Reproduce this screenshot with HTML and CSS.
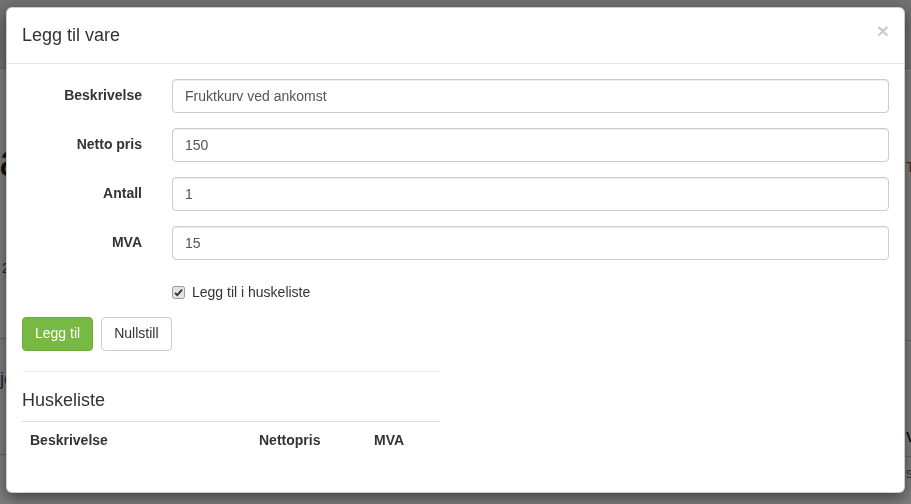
FILE: index.html
```html
<!DOCTYPE html>
<html lang="no">

<head>
    <meta charset="UTF-8">
    <meta name="viewport" content="width=device-width, initial-scale=1.0">
    <title>Legg til vare</title>
    <link rel="stylesheet" href="styles.css">
</head>

<body>
    <!-- siden bak dialogen -->
    <div class="page">
        <div class="topbar"></div>
        <div class="page-cols">
            <div class="page-left">
                <h1 class="page-title">av</h1>
                <p class="page-date">2017</p>
                <div class="page-rule"></div>
                <a class="page-link" href="#">jevnlig</a>
                <div class="page-rule low"></div>
            </div>
            <div class="page-right">
                <p class="page-warn">Trekk</p>
                <div class="page-rule mid"></div>
                <p class="page-head">Vare</p>
                <div class="page-rule tight"></div>
                <p class="page-sum">sum</p>
            </div>
        </div>
    </div>

    <div class="backdrop"></div>

    <div class="modal">
        <div class="modal-content">
            <div class="modal-header">
                <button type="button" class="close">&times;</button>
                <h4 class="modal-title">Legg til vare</h4>
            </div>

            <div class="modal-body">
                <form class="form-horizontal">
                    <div class="form-group">
                        <label class="control-label">Beskrivelse</label>
                        <input class="form-control" type="text" value="Fruktkurv ved ankomst">
                    </div>
                    <div class="form-group">
                        <label class="control-label">Netto pris</label>
                        <input class="form-control" type="text" value="150">
                    </div>
                    <div class="form-group">
                        <label class="control-label">Antall</label>
                        <input class="form-control" type="text" value="1">
                    </div>
                    <div class="form-group">
                        <label class="control-label">MVA</label>
                        <input class="form-control" type="text" value="15">
                    </div>
                    <div class="form-group">
                        <label class="checkbox">
                            <svg class="check-box" width="13" height="13" viewBox="0 0 13 13">
                                <rect x="0.5" y="0.5" width="12" height="12" rx="2" fill="#e3e3e3" stroke="#9a9a9a"/>
                                <path d="M3 6.8 L5.3 9.2 L10 3.6" fill="none" stroke="#333" stroke-width="1.9"/>
                            </svg>
                            Legg til i huskeliste
                        </label>
                    </div>

                    <div class="btn-row">
                        <button type="button" class="btn btn-success">Legg til</button>
                        <button type="button" class="btn btn-default">Nullstill</button>
                    </div>
                </form>

                <div class="wish-col">
                    <hr>
                    <h4 class="wish-title">Huskeliste</h4>
                    <table class="table">
                        <tr>
                            <th class="col-desc">Beskrivelse</th>
                            <th class="col-price">Nettopris</th>
                            <th>MVA</th>
                        </tr>
                    </table>
                </div>
            </div>
        </div>
    </div>
</body>

</html>
```

FILE: styles.css
```css
* {
    box-sizing: border-box;
}

body {
    margin: 0;
    font-family: "Liberation Sans", Arial, Helvetica, sans-serif;
    font-size: 14px;
    line-height: 1.42857;
    color: #333;
    background-color: #fff;
    overflow: hidden;
}

/* siden bak */
.page {
    height: 504px;
}

.topbar {
    height: 69px;
    background-color: #e2e2e2;
    border-bottom: 1px solid #c8c8c8;
}

.page-cols {
    display: flex;
}

.page-left {
    flex: none;
    width: 906px;
}

.page-right {
    flex: none;
    width: 200px;
}

.page-left p,
.page-right p {
    margin: 0;
    line-height: 20px;
}

.page-title {
    margin: 66px 0 0 -1px;
    font-size: 46px;
    font-weight: 500;
    line-height: 1.1;
    color: #222;
}

.page-left .page-date {
    margin: 72px 0 0 2px;
    color: #333;
}

.page-rule {
    height: 1px;
    margin-top: 60px;
    background-color: #ccc;
}

.page-rule.low {
    margin-top: 62px;
}

.page-rule.mid {
    margin-top: 163px;
}

.page-rule.tight {
    margin-top: 9px;
}

.page-link {
    display: block;
    margin-top: 28px;
    font-size: 18px;
    color: #1f4f82;
    text-decoration: none;
}

.page-right .page-warn {
    margin-top: 88px;
    color: #a94442;
}

.page-right .page-head {
    margin-top: 86px;
    font-weight: bold;
    color: #222;
}

.page-right .page-sum {
    margin-top: 6px;
    color: #666;
}

.backdrop {
    position: fixed;
    inset: 0;
    background-color: rgba(0, 0, 0, 0.5);
}

/* dialog */
.modal {
    position: fixed;
    top: 7px;
    left: 6px;
    width: 899px;
}

.modal-content {
    background-color: #fff;
    border: 1px solid rgba(0, 0, 0, 0.2);
    border-radius: 6px;
    box-shadow: 0 5px 15px rgba(0, 0, 0, 0.5);
}

.modal-header {
    padding: 15px 15px 14px;
    border-bottom: 1px solid #e5e5e5;
}

.modal-title {
    margin: 0;
    font-size: 18px;
    font-weight: 500;
    line-height: 1.42857;
}

.close {
    float: right;
    margin-top: -3px;
    padding: 0;
    border: 0;
    background: transparent;
    font-family: inherit;
    font-size: 21px;
    font-weight: bold;
    line-height: 1;
    color: #000;
    text-shadow: 0 1px 0 #fff;
    opacity: 0.2;
}

.modal-body {
    padding: 15px;
}

.form-group {
    display: grid;
    grid-template-columns: 120px 1fr;
    column-gap: 30px;
    margin-bottom: 15px;
}

.control-label {
    padding-top: 7px;
    text-align: right;
    font-weight: bold;
}

.form-control {
    display: block;
    width: 100%;
    height: 34px;
    padding: 6px 12px;
    font-family: inherit;
    font-size: 14px;
    line-height: 1.42857;
    color: #555;
    background-color: #fff;
    border: 1px solid #ccc;
    border-radius: 4px;
    box-shadow: inset 0 1px 1px rgba(0, 0, 0, 0.075);
}

.checkbox {
    grid-column: 2;
    display: flex;
    align-items: center;
    gap: 7px;
    min-height: 27px;
    padding-top: 7px;
    line-height: 20px;
}

.check-box {
    flex: none;
    margin-top: 1px;
}

.btn-row {
    display: flex;
    gap: 8px;
}

.btn {
    height: 34px;
    padding: 6px 12px;
    font-family: inherit;
    font-size: 14px;
    line-height: 1.42857;
    border: 1px solid transparent;
    border-radius: 4px;
}

.btn-success {
    color: #fff;
    background-color: #77b943;
    border-color: #6dab3c;
}

.btn-default {
    color: #333;
    background-color: #fff;
    border-color: #ccc;
}

.wish-col {
    width: 418px;
}

hr {
    margin: 20px 0 16px;
    border: 0;
    border-top: 1px solid #eee;
}

.wish-title {
    margin: 0 0 8px;
    font-size: 18px;
    font-weight: 500;
    line-height: 1.42857;
}

.table {
    width: 100%;
    margin-bottom: 19px;
    border-collapse: collapse;
}

.table th {
    padding: 8px;
    text-align: left;
    line-height: 20px;
    border-top: 1px solid #ddd;
}

.col-desc {
    width: 229px;
}

.col-price {
    width: 115px;
}
```
